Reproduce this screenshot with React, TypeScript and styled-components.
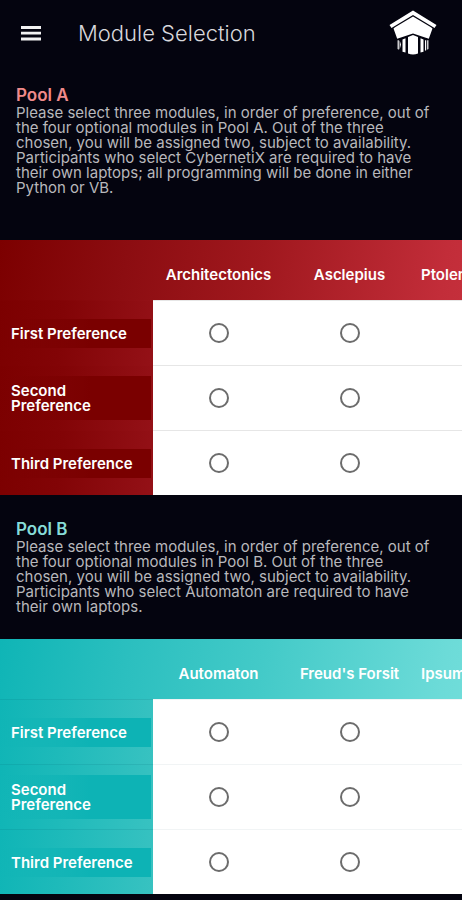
import React from 'react';
import styled, { createGlobalStyle } from 'styled-components';

type Palette = {
  title: string;
  head: string;
  side: string;
  band: string;
  rule: string;
  sideRule: string;
};

const red: Palette = {
  title: '#f08a8a',
  head: 'linear-gradient(100deg, #7c0000 0%, #8c0d11 22%, #a0181e 45%, #c22d39 76%, #cf3946 100%)',
  side: 'linear-gradient(97deg, #7c0000 0%, #820406 40%, #941117 100%)',
  band: '#7a0000',
  rule: '#e6e6e6',
  sideRule: 'transparent',
};

const teal: Palette = {
  title: '#86dcd8',
  head: 'linear-gradient(100deg, #0fb5b6 0%, #2bbfbf 22%, #43cac8 45%, #6cdbd8 76%, #80e4e0 100%)',
  side: 'linear-gradient(97deg, #0fb5b6 0%, #1ebaba 40%, #38c2c1 100%)',
  band: '#0db3b5',
  rule: '#f1f4f5',
  sideRule: 'rgba(0, 110, 120, 0.15)',
};

const GlobalStyle = createGlobalStyle`
  * {
    box-sizing: border-box;
  }
  body {
    margin: 0;
    background: #04040f;
    font-family: Inter, "Open Sans", sans-serif;
    color: #b8b8bc;
  }
`;

const Page = styled.main`
  min-height: 100vh;
  overflow: hidden;
`;

const TopBar = styled.header`
  display: flex;
  align-items: center;
  height: 61px;
  padding: 5px 25px 0 20px;
`;

const MenuButton = styled.button`
  display: flex;
  padding: 0;
  border: 0;
  background: none;
  color: #f2f2f2;
  cursor: pointer;
`;

const Title = styled.h1`
  flex: 1;
  margin: 0 0 0 36px;
  font-size: 22px;
  font-weight: 300;
  line-height: 32px;
  color: #d8d8dc;
`;

const Intro = styled.section<{ $gap: number }>`
  padding: 25px 24px ${(p) => p.$gap}px 16px;
`;

const PoolTitle = styled.h2<{ $color: string }>`
  margin: 0;
  font-size: 17px;
  font-weight: 600;
  line-height: 19px;
  color: ${(p) => p.$color};
`;

const Copy = styled.p`
  margin: 0;
  font-size: 15px;
  font-weight: 400;
  line-height: 15px;
`;

const Scroller = styled.div`
  overflow-x: auto;
  scrollbar-width: none;
`;

const Grid = styled.table<{ $bg: string }>`
  width: 546px;
  table-layout: fixed;
  border-collapse: separate;
  border-spacing: 0;
  background: ${(p) => p.$bg};
`;

const SideCol = styled.col`
  width: 153px;
`;

const Corner = styled.td`
  height: 60px;
  padding: 0;
`;

const ModuleHead = styled.th<{ $start: boolean }>`
  padding: 10px 6px 0;
  font-size: 15px;
  font-weight: 600;
  line-height: 18px;
  text-align: ${(p) => (p.$start ? 'left' : 'center')};
  white-space: nowrap;
  color: #fff;
`;

const RowHead = styled.th<{ $palette: Palette }>`
  height: 65px;
  padding: 0;
  text-align: left;
  background: ${(p) => p.$palette.side};
  border-top: 1px solid ${(p) => p.$palette.sideRule};
`;

const RowLabel = styled.div<{ $band: string }>`
  margin-right: 2px;
  padding: 7px 12px 7px 11px;
  font-size: 15px;
  font-weight: 600;
  line-height: 15px;
  color: #fff;
  background: linear-gradient(90deg, transparent, ${(p) => p.$band} 60%);
`;

const Choice = styled.td<{ $rule: string }>`
  padding: 0;
  text-align: center;
  vertical-align: middle;
  background: #fff;
  border-top: 1px solid ${(p) => p.$rule};
`;

const Radio = styled.input`
  appearance: none;
  display: block;
  width: 20px;
  height: 20px;
  margin: 0 auto;
  border: 2px solid #6c6c6c;
  border-radius: 50%;
  background: #fff;
  cursor: pointer;

  &:checked {
    box-shadow: inset 0 0 0 3px #fff, inset 0 0 0 10px #6c6c6c;
  }
`;

const MenuIcon = () => (
  <svg width="22" height="16" viewBox="0 0 22 16" aria-hidden="true">
    <path d="M1 2.5h20M1 8.2h20M1 14h20" stroke="currentColor" strokeWidth="2.8" />
  </svg>
);

const TempleLogo = () => (
  <svg width="48" height="46" viewBox="0 0 48 46" role="img" aria-label="Temple logo">
    <g fill="#fff">
      <path d="M24 0.5 47.5 15 45.5 18 24 5 2.5 18 0.5 15Z" />
      <path d="M24 6.4 42 17.2 43.5 18.5 39.8 28.8 24 23.4 8.2 28.8 4.5 18.5 6 17.2Z" />
      <path d="M24 25 29 27V43.5Q24 45.5 19 43.5V27Z" />
      <path d="M13.5 29.5 16.5 28.3V42.5L13.5 41.8Z" />
      <path d="M34.5 29.5 31.5 28.3V42.5L34.5 41.8Z" />
      <path d="M8.6 30.2H9.8V39.8L8.6 39ZM10.6 30.2 12 34.5 10.6 39.8Z" />
      <path d="M39.4 30.2H38.2V39.8L39.4 39ZM36 30.2H37.2V40.2L36 40.8Z" />
    </g>
  </svg>
);

const preferences = ['First Preference', 'Second Preference', 'Third Preference'];

type PoolProps = {
  name: string;
  text: string;
  gap: number;
  modules: string[];
  palette: Palette;
};

const Pool = ({ name, text, gap, modules, palette }: PoolProps) => (
  <>
    <Intro $gap={gap}>
      <PoolTitle $color={palette.title}>{name}</PoolTitle>
      <Copy>{text}</Copy>
    </Intro>
    <Scroller>
      <Grid $bg={palette.head} aria-label={name}>
        <colgroup>
          <SideCol />
          {modules.map((m) => (
            <col key={m} />
          ))}
        </colgroup>
        <thead>
          <tr>
            <Corner />
            {modules.map((m, i) => (
              <ModuleHead key={m} scope="col" $start={i === 2}>
                {m}
              </ModuleHead>
            ))}
          </tr>
        </thead>
        <tbody>
          {preferences.map((pref) => (
            <tr key={pref}>
              <RowHead scope="row" $palette={palette}>
                <RowLabel $band={palette.band}>{pref}</RowLabel>
              </RowHead>
              {modules.map((m) => (
                <Choice key={m} $rule={palette.rule}>
                  <Radio type="radio" name={`${name} ${pref}`} value={m} aria-label={`${pref}: ${m}`} />
                </Choice>
              ))}
            </tr>
          ))}
        </tbody>
      </Grid>
    </Scroller>
  </>
);

export default function App() {
  return (
    <>
      <GlobalStyle />
      <Page>
        <TopBar>
          <MenuButton type="button" aria-label="Menu">
            <MenuIcon />
          </MenuButton>
          <Title>Module Selection</Title>
          <TempleLogo />
        </TopBar>
        <Pool
          name="Pool A"
          gap={45}
          palette={red}
          modules={['Architectonics', 'Asclepius', 'Ptolemaeus']}
          text="Please select three modules, in order of preference, out of the four optional modules in Pool A. Out of the three chosen, you will be assigned two, subject to availability. Participants who select CybernetiX are required to have their own laptops; all programming will be done in either Python or VB."
        />
        <Pool
          name="Pool B"
          gap={25}
          palette={teal}
          modules={['Automaton', "Freud's Forsit", 'Ipsum']}
          text="Please select three modules, in order of preference, out of the four optional modules in Pool B. Out of the three chosen, you will be assigned two, subject to availability. Participants who select Automaton are required to have their own laptops."
        />
      </Page>
    </>
  );
}
